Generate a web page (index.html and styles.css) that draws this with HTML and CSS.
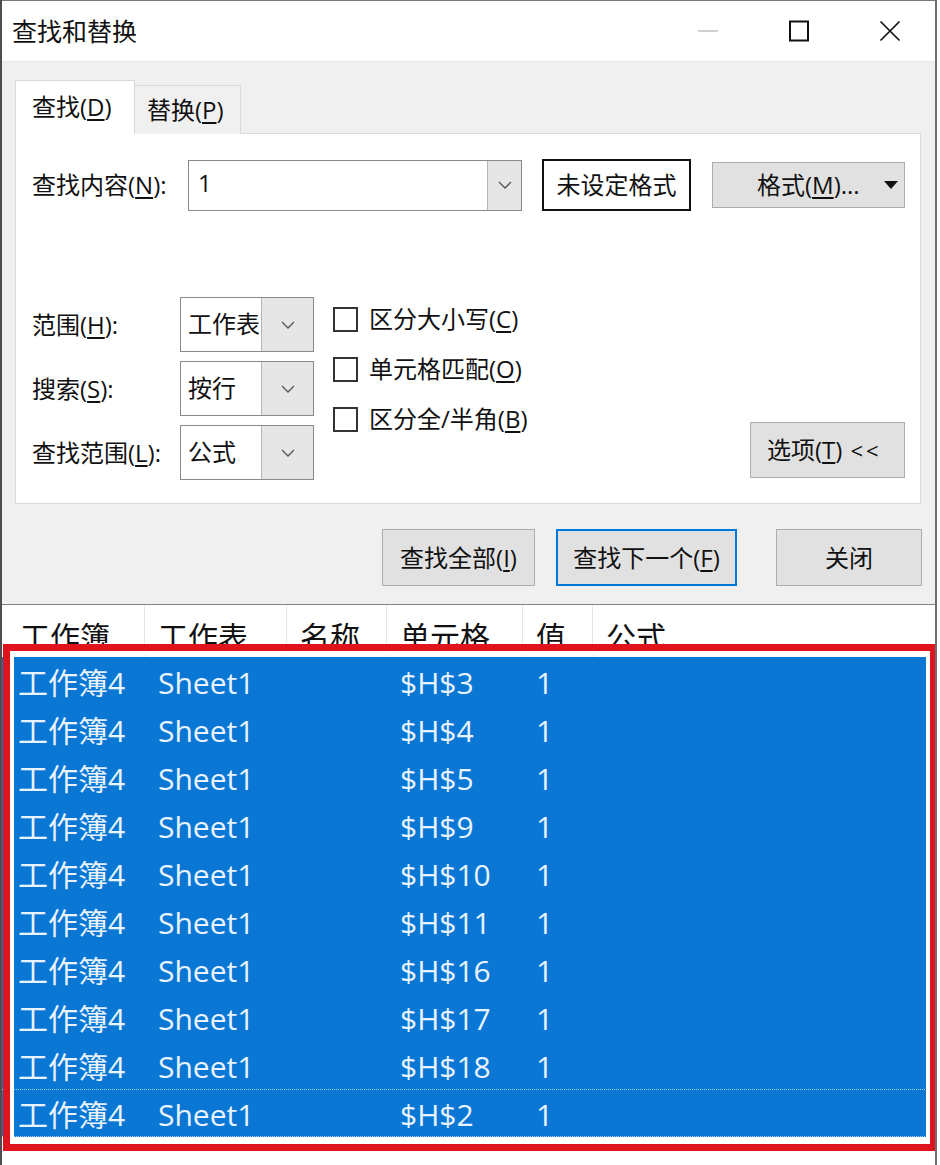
FILE: index.html
```html
<!DOCTYPE html>
<html lang="zh-CN">
<head>
<meta charset="utf-8">
<title>查找和替换</title>
<link rel="stylesheet" href="styles.css">
</head>
<body>
<div class="window">
  <header class="titlebar">
    <span class="title">查找和替换</span>
    <div class="caption">
      <span class="cap-btn"><svg width="22" height="22" viewBox="0 0 22 22"><line x1="1" y1="11" x2="21" y2="11" stroke="#c4c4c4" stroke-width="1.6"/></svg></span>
      <span class="cap-btn"><svg width="22" height="22" viewBox="0 0 22 22"><rect x="2" y="1.5" width="18" height="19" fill="none" stroke="#111" stroke-width="2"/></svg></span>
      <span class="cap-btn"><svg width="22" height="22" viewBox="0 0 22 22"><path d="M1.5 1.5 L20.5 20.5 M20.5 1.5 L1.5 20.5" stroke="#111" stroke-width="1.7" fill="none"/></svg></span>
    </div>
  </header>

  <main class="content">
    <div class="tabs">
      <div class="tab tab-active">查找(<u>D</u>)</div>
      <div class="tab tab-idle">替换(<u>P</u>)</div>
    </div>

    <section class="panel">
      <div class="find-row">
        <span class="find-label">查找内容(<u>N</u>):</span>
        <div class="combo combo-find">
          <span class="combo-text">1</span>
          <span class="combo-arrow arrow-find"><svg width="14" height="8" viewBox="0 0 14 8"><polyline points="1,1 7,7 13,1" fill="none" stroke="#555" stroke-width="1.3"/></svg></span>
        </div>
        <div class="fmt-preview">未设定格式</div>
        <button class="btn btn-format"><span>格式(<u>M</u>)...</span><svg class="tri" width="14" height="9" viewBox="0 0 14 9"><polygon points="0,0 14,0 7,8" fill="#111"/></svg></button>
      </div>

      <div class="options">
        <div class="select-grid">
          <span class="opt-label">范围(<u>H</u>):</span>
          <div class="combo combo-sel">
            <span class="combo-text">工作表</span>
            <span class="combo-arrow arrow-sel"><svg width="14" height="8" viewBox="0 0 14 8"><polyline points="1,1 7,7 13,1" fill="none" stroke="#555" stroke-width="1.3"/></svg></span>
          </div>
          <span class="opt-label">搜索(<u>S</u>):</span>
          <div class="combo combo-sel">
            <span class="combo-text">按行</span>
            <span class="combo-arrow arrow-sel"><svg width="14" height="8" viewBox="0 0 14 8"><polyline points="1,1 7,7 13,1" fill="none" stroke="#555" stroke-width="1.3"/></svg></span>
          </div>
          <span class="opt-label">查找范围(<u>L</u>):</span>
          <div class="combo combo-sel">
            <span class="combo-text">公式</span>
            <span class="combo-arrow arrow-sel"><svg width="14" height="8" viewBox="0 0 14 8"><polyline points="1,1 7,7 13,1" fill="none" stroke="#555" stroke-width="1.3"/></svg></span>
          </div>
        </div>

        <div class="checks">
          <div class="check"><span class="box"></span>区分大小写(<u>C</u>)</div>
          <div class="check"><span class="box"></span>单元格匹配(<u>O</u>)</div>
          <div class="check"><span class="box"></span>区分全/半角(<u>B</u>)</div>
        </div>

        <button class="btn btn-options">选项(<u>T</u>) <span class="chev">&lt;&lt;</span></button>
      </div>
    </section>

    <div class="actions">
      <button class="btn btn-findall">查找全部(<u>I</u>)</button>
      <button class="btn btn-findnext">查找下一个(<u>F</u>)</button>
      <button class="btn btn-close">关闭</button>
    </div>
  </main>

  <div class="results">
    <div class="thead">
      <span class="cell">工作簿</span>
      <span class="cell">工作表</span>
      <span class="cell">名称</span>
      <span class="cell">单元格</span>
      <span class="cell">值</span>
      <span class="cell">公式</span>
    </div>
    <div class="row"><span class="cell">工作簿4</span><span class="cell">Sheet1</span><span class="cell"></span><span class="cell">$H$3</span><span class="cell">1</span><span class="cell"></span></div>
    <div class="row"><span class="cell">工作簿4</span><span class="cell">Sheet1</span><span class="cell"></span><span class="cell">$H$4</span><span class="cell">1</span><span class="cell"></span></div>
    <div class="row"><span class="cell">工作簿4</span><span class="cell">Sheet1</span><span class="cell"></span><span class="cell">$H$5</span><span class="cell">1</span><span class="cell"></span></div>
    <div class="row"><span class="cell">工作簿4</span><span class="cell">Sheet1</span><span class="cell"></span><span class="cell">$H$9</span><span class="cell">1</span><span class="cell"></span></div>
    <div class="row"><span class="cell">工作簿4</span><span class="cell">Sheet1</span><span class="cell"></span><span class="cell">$H$10</span><span class="cell">1</span><span class="cell"></span></div>
    <div class="row"><span class="cell">工作簿4</span><span class="cell">Sheet1</span><span class="cell"></span><span class="cell">$H$11</span><span class="cell">1</span><span class="cell"></span></div>
    <div class="row"><span class="cell">工作簿4</span><span class="cell">Sheet1</span><span class="cell"></span><span class="cell">$H$16</span><span class="cell">1</span><span class="cell"></span></div>
    <div class="row"><span class="cell">工作簿4</span><span class="cell">Sheet1</span><span class="cell"></span><span class="cell">$H$17</span><span class="cell">1</span><span class="cell"></span></div>
    <div class="row"><span class="cell">工作簿4</span><span class="cell">Sheet1</span><span class="cell"></span><span class="cell">$H$18</span><span class="cell">1</span><span class="cell"></span></div>
    <div class="row row-focus"><span class="cell">工作簿4</span><span class="cell">Sheet1</span><span class="cell"></span><span class="cell">$H$2</span><span class="cell">1</span><span class="cell"></span></div>
  </div>

  <div class="annot"></div>
</div>
</body>
</html>
```

FILE: styles.css
```css
* {
  box-sizing: border-box;
}

html, body {
  margin: 0;
  padding: 0;
  background: #ffffff;
}

body {
  font-family: "Open Sans", "Noto Sans CJK SC", sans-serif;
  color: #111;
}

u {
  text-decoration: underline;
  text-decoration-thickness: 1.5px;
  text-underline-offset: 3px;
}

.window {
  position: relative;
  width: 937px;
  height: 1165px;
  border-left: 2px solid #4e4e4e;
  border-right: 2px solid #6e6e6e;
  background: #f0f0f0;
  display: flex;
  flex-direction: column;
  overflow: hidden;
}

/* ---------- title bar ---------- */
.titlebar {
  height: 62px;
  flex: none;
  background: #ffffff;
  border-top: 1px solid #7a7a7a;
  border-bottom: 1px solid #e6e6e6;
  display: flex;
  align-items: center;
  padding-left: 10px;
}

.title {
  font-size: 25px;
  line-height: 30px;
  color: #111;
}

.caption {
  margin-left: auto;
  display: flex;
  height: 100%;
}

.cap-btn {
  width: 91px;
  height: 100%;
  display: flex;
  align-items: center;
  justify-content: center;
}

/* ---------- content ---------- */
.content {
  flex: none;
  padding: 18px 14px 18px 13px;
}

.tabs {
  display: flex;
  align-items: flex-end;
  height: 54px;
  margin-bottom: -1px;
}

.tab {
  font-size: 24px;
  line-height: 30px;
  display: flex;
  align-items: center;
  border: 1px solid #d9d9d9;
  border-bottom: none;
}

.tab-active {
  position: relative;
  width: 120px;
  height: 54px;
  background: #ffffff;
  padding-left: 16px;
  padding-bottom: 2px;
}

.tab-idle {
  width: 106px;
  height: 49px;
  background: #f0f0f0;
  border-left: none;
  padding-left: 12px;
}

.panel {
  background: #ffffff;
  border: 1px solid #d9d9d9;
  padding: 25px 15px 23px 16px;
}

.find-row {
  display: flex;
  align-items: center;
  height: 52px;
}

.find-label {
  width: 156px;
  font-size: 24px;
  line-height: 30px;
}

.combo {
  display: flex;
  border: 1px solid #8a8a8a;
  background: #ffffff;
}

.combo-text {
  flex: 1;
  font-size: 24px;
  line-height: 30px;
  display: flex;
  align-items: center;
}

.combo-arrow {
  display: flex;
  align-items: center;
  justify-content: center;
  background: #e6e6e6;
  border-left: 1px solid #b4b4b4;
}

.combo-find {
  width: 334px;
  height: 51px;
}

.combo-find .combo-text {
  padding-left: 9px;
  padding-bottom: 4px;
}

.arrow-find {
  width: 34px;
}

.fmt-preview {
  margin-left: 20px;
  width: 149px;
  height: 52px;
  border: 2px solid #111;
  background: #ffffff;
  font-size: 24px;
  line-height: 30px;
  display: flex;
  align-items: center;
  justify-content: center;
}

.btn {
  font-family: "Open Sans", "Noto Sans CJK SC", sans-serif;
  font-size: 24px;
  line-height: 30px;
  color: #111;
  background: #e1e1e1;
  border: 1px solid #adadad;
  padding: 0;
  margin: 0;
  display: flex;
  align-items: center;
  justify-content: center;
}

.btn-format {
  margin-left: 21px;
  width: 193px;
  height: 46px;
  justify-content: flex-start;
  padding-left: 44px;
  padding-right: 6px;
}

.btn-format .tri {
  margin-left: auto;
}

/* ---------- options ---------- */
.options {
  display: flex;
  align-items: flex-start;
  margin-top: 86px;
}

.select-grid {
  display: grid;
  grid-template-columns: 148px 134px;
  grid-auto-rows: 55px;
  row-gap: 9px;
  align-items: center;
}

.opt-label {
  font-size: 24px;
  line-height: 30px;
}

.combo-sel {
  width: 134px;
  height: 55px;
}

.combo-sel .combo-text {
  padding-left: 7px;
  padding-bottom: 2px;
}

.arrow-sel {
  width: 52px;
}

.checks {
  margin-left: 19px;
  margin-top: -3px;
  display: flex;
  flex-direction: column;
}

.check {
  height: 50px;
  display: flex;
  align-items: center;
  font-size: 24px;
  line-height: 30px;
}

.box {
  width: 25px;
  height: 25px;
  border: 2px solid #333;
  background: #fff;
  margin-right: 11px;
  flex: none;
}

.btn-options {
  margin-left: auto;
  align-self: flex-end;
  margin-bottom: 2px;
  width: 155px;
  height: 56px;
  justify-content: flex-start;
  padding-left: 16px;
}

.chev {
  margin-left: 8px;
  letter-spacing: 3px;
  font-size: 22px;
}

/* ---------- action buttons ---------- */
.actions {
  display: flex;
  justify-content: flex-end;
  margin-top: 25px;
  margin-right: -1px;
}

.actions .btn {
  height: 57px;
}

.btn-findall {
  width: 153px;
  margin-right: 21px;
}

.btn-findnext {
  width: 181px;
  margin-right: 39px;
  border: 2px solid #0078d7;
}

.btn-close {
  width: 146px;
}

/* ---------- results list ---------- */
.results {
  flex: 1;
  background: #ffffff;
  border-top: 1px solid #828282;
}

.thead,
.row {
  display: grid;
  grid-template-columns: 143px 142px 100px 136px 70px 1fr;
}

.thead {
  height: 52px;
}

.thead .cell {
  font-size: 30px;
  line-height: 40px;
  padding-top: 12px;
  padding-left: 13px;
  border-right: 1px solid #e5e5e5;
  color: #111;
  white-space: nowrap;
  overflow: hidden;
}

.thead .cell:first-child {
  padding-left: 18px;
}

.thead .cell:last-child {
  border-right: none;
}

.row {
  height: 48px;
  background: #0a77d5;
}

.row .cell {
  font-size: 30px;
  line-height: 48px;
  padding-top: 2px;
  color: #e8f3ff;
  padding-left: 13px;
  white-space: nowrap;
}

.row .cell:first-child {
  padding-left: 16px;
}

.row-focus {
  border-top: 1px dotted #a9cff2;
  border-bottom: 1px dotted #a9cff2;
}

.row-focus .cell {
  line-height: 46px;
}

/* ---------- red annotation box ---------- */
.annot {
  position: absolute;
  left: 1px;
  top: 644px;
  width: 934px;
  height: 507px;
  border: 7px solid #e0141c;
  box-shadow: inset 0 0 0 4px #ffffff;
  pointer-events: none;
}
```
